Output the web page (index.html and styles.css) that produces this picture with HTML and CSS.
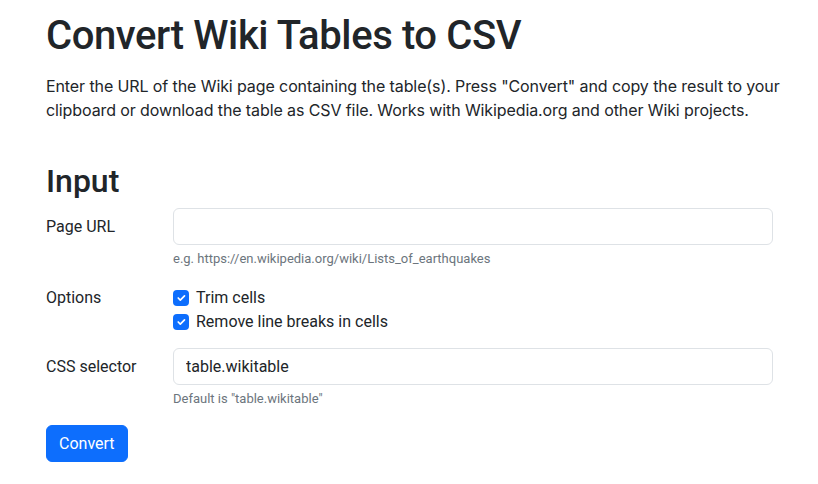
FILE: index.html
```html
<!DOCTYPE html>
<html lang="en">
<head>
<meta charset="utf-8">
<title>Convert Wiki Tables to CSV</title>
<link rel="stylesheet" href="styles.css">
</head>
<body>
<main class="container">
  <h1 class="title">Convert Wiki Tables to CSV</h1>
  <p class="lead-text">Enter the URL of the Wiki page containing the table(s). Press "Convert" and copy the result to your clipboard or download the table as CSV file. Works with Wikipedia.org and other Wiki projects.</p>

  <h2 class="section-title">Input</h2>
  <form class="form">
    <div class="form-row">
      <label class="form-label" for="url">Page URL</label>
      <div class="form-field">
        <input class="form-control" id="url" type="text">
        <div class="form-text">e.g. https://en.wikipedia.org/wiki/Lists_of_earthquakes</div>
      </div>
    </div>
    <div class="form-row options-row">
      <div class="form-label">Options</div>
      <div class="form-field">
        <label class="check"><span class="check-box"><svg viewBox="0 0 20 20" width="14" height="14"><path d="M6 10l3 3l6-6" fill="none" stroke="#fff" stroke-width="2.4" stroke-linecap="round" stroke-linejoin="round"/></svg></span>Trim cells</label>
        <label class="check"><span class="check-box"><svg viewBox="0 0 20 20" width="14" height="14"><path d="M6 10l3 3l6-6" fill="none" stroke="#fff" stroke-width="2.4" stroke-linecap="round" stroke-linejoin="round"/></svg></span>Remove line breaks in cells</label>
      </div>
    </div>
    <div class="form-row last-row">
      <label class="form-label" for="sel">CSS selector</label>
      <div class="form-field">
        <input class="form-control" id="sel" type="text" value="table.wikitable">
        <div class="form-text">Default is "table.wikitable"</div>
      </div>
    </div>
    <button class="btn" type="button">Convert</button>
  </form>
</main>
</body>
</html>
```

FILE: styles.css
```css
* { box-sizing: border-box; }
body {
  margin: 0;
  font-family: Roboto, "Liberation Sans", sans-serif;
  font-size: 16px;
  line-height: 1.5;
  color: #212529;
  background: #fff;
}
.container {
  width: 773px;
  padding: 12px 0 0 46px;
}
.title {
  font-size: 40px;
  font-weight: 500;
  line-height: 1.2;
  margin: 0 0 14px;
  letter-spacing: -0.4px;
}
.lead-text {
  margin: 0 0 40px;
  font-family: Inter, Roboto, sans-serif;
  font-size: 16px;
  line-height: 24px;
  letter-spacing: -0.1px;
  width: 760px;
}
.section-title {
  font-size: 32px;
  font-weight: 500;
  line-height: 1.2;
  margin: 0 0 8px;
}
.form-row {
  display: grid;
  grid-template-columns: 127px 1fr;
  margin-bottom: 18px;
}
.form-label {
  padding-top: 7px;
  line-height: 24px;
}
.options-row .form-label { padding-top: 0; }
.options-row { margin-bottom: 14px; }
.last-row { margin-bottom: 17px; }
.form-control {
  display: block;
  width: 100%;
  height: 37px;
  padding: 6px 12px;
  font: inherit;
  color: #212529;
  border: 1px solid #dee2e6;
  border-radius: 6px;
  background: #fff;
  outline: none;
}
.form-text {
  margin-top: 4px;
  font-size: 13px;
  line-height: 19px;
  color: #6c757d;
}
.check {
  display: flex;
  align-items: center;
  gap: 7px;
  line-height: 24px;
}
.check-box {
  width: 16px;
  height: 16px;
  border-radius: 4px;
  background: #0d6efd;
  display: flex;
  align-items: center;
  justify-content: center;
}
.btn {
  font: inherit;
  color: #fff;
  background: #0d6efd;
  border: 1px solid #0d6efd;
  border-radius: 6px;
  padding: 6px 12px;
  line-height: 23px;
  cursor: pointer;
}
```
